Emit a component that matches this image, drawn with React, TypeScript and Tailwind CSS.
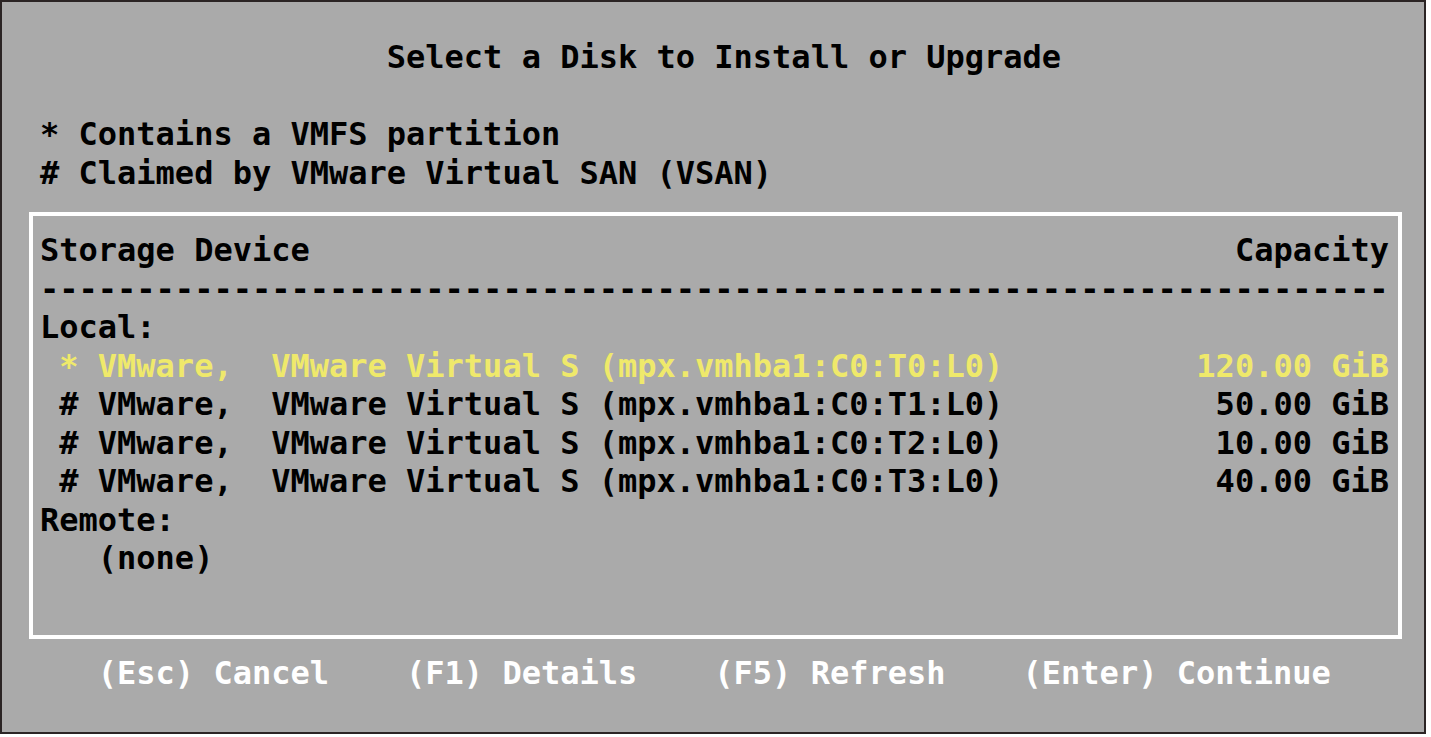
const mono = { fontFamily: '"DejaVu Sans Mono", "Liberation Mono", monospace' };

const disks = [
  { mark: "*", id: "T0", size: "120.00 GiB", selected: true },
  { mark: "#", id: "T1", size: "50.00 GiB", selected: false },
  { mark: "#", id: "T2", size: "10.00 GiB", selected: false },
  { mark: "#", id: "T3", size: "40.00 GiB", selected: false },
];

function Row({ children, className = "" }: { children?: React.ReactNode; className?: string }) {
  return <div className={`h-[38.5px] leading-[38.5px] whitespace-pre ${className}`}>{children}</div>;
}

export default function App() {
  return (
    <div className="w-[1431px] h-[737px] bg-white overflow-hidden">
      <div
        style={mono}
        className="w-[1426px] h-[734px] border-2 border-[#2b2424] bg-[#aaaaaa] pl-[38px] pt-[36px] text-[32px] font-bold text-black"
      >
        <Row>{"                  Select a Disk to Install or Upgrade"}</Row>
        <Row />
        <Row>* Contains a VMFS partition</Row>
        <Row># Claimed by VMware Virtual SAN (VSAN)</Row>

        {/* disk table */}
        <div className="mt-[20px] ml-[-11px] w-[1373px] border-4 border-white pl-[7px] pr-[9px] pt-[15px] pb-[19px]">
          <Row className="flex justify-between">
            <span>Storage Device</span>
            <span>Capacity</span>
          </Row>
          <Row>{"-".repeat(70)}</Row>
          <Row>Local:</Row>
          {disks.map((d) => (
            <Row
              key={d.id}
              className={`flex justify-between ${d.selected ? "text-[#efe96b]" : "text-black"}`}
            >
              <span>{` ${d.mark} VMware,  VMware Virtual S (mpx.vmhba1:C0:${d.id}:L0)`}</span>
              <span>{d.size}</span>
            </Row>
          ))}
          <Row>Remote:</Row>
          <Row>{"   (none)"}</Row>
          <Row />
        </div>

        <Row className="mt-[15px] text-white">
          {"   (Esc) Cancel    (F1) Details    (F5) Refresh    (Enter) Continue"}
        </Row>
      </div>
    </div>
  );
}
